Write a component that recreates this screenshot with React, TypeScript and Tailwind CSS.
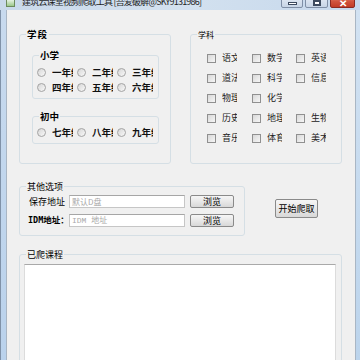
import React from "react";

const font = { fontFamily: '"Noto Sans CJK SC", "Noto Sans", sans-serif' };

function GroupBox({
  label,
  className,
  labelClass,
  children,
}: {
  label: string;
  className: string;
  labelClass?: string;
  children?: React.ReactNode;
}) {
  return (
    <div className={`relative rounded-[3px] border border-[#d5dfe5] ${className}`}>
      <span
        className={`absolute left-[6px] top-[-6px] bg-[#f0f0f0] px-[1px] leading-[11px] text-black ${
          labelClass ?? "text-[9px]"
        }`}
      >
        {label}
      </span>
      {children}
    </div>
  );
}

function Radio({ text }: { text: string }) {
  return (
    <div className="flex h-[13px] w-[40px] items-center overflow-hidden whitespace-nowrap">
      <span className="h-[9px] w-[9px] shrink-0 rounded-full border border-[#a3a3a3] bg-gradient-to-br from-[#d6d6d6] to-[#f8f8f8]" />
      <span className="ml-[6px] w-[21px] overflow-hidden text-[9.5px] font-bold leading-[13px] text-[#111]">
        {text}
      </span>
    </div>
  );
}

function Check({ text }: { text?: string }) {
  if (!text) return <div />;
  return (
    <div className="flex h-[20px] items-center whitespace-nowrap">
      <span className="h-[9px] w-[9px] shrink-0 border border-[#909090] bg-gradient-to-br from-[#d8d8d8] to-[#f6f6f6]" />
      <span className="ml-[6px] w-[15px] overflow-hidden text-[9px] leading-[12px] text-[#222]">{text}</span>
    </div>
  );
}

function WinButton({ className, children }: { className: string; children: React.ReactNode }) {
  return (
    <div
      className={`flex items-center justify-center rounded-[2px] border border-[#7f8fa6] text-[7px] leading-none ${className}`}
    >
      {children}
    </div>
  );
}

function Btn({ label, className }: { label: string; className: string }) {
  return (
    <div
      className={`flex items-center justify-center rounded-[2px] border border-[#8a8a8a] bg-gradient-to-b from-[#f6f6f6] via-[#e8e8e8] to-[#d8d8d8] text-[9px] leading-none text-black ${className}`}
    >
      {label}
    </div>
  );
}

export default function App() {
  const subjects: (string | undefined)[] = [
    "语文", "数学", "英语",
    "道法", "科学", "信息",
    "物理", "化学", undefined,
    "历史", "地理", "生物",
    "音乐", "体育", "美术",
  ];

  return (
    <div className="relative flex h-[360px] w-[360px] flex-col overflow-hidden bg-[#c4d7ec]" style={font}>
      {/* title bar */}
      <div className="flex h-[10px] shrink-0 overflow-hidden bg-gradient-to-r from-[#c9d9ea] via-[#d3e1ef] to-[#c6d8ec]">
        <div className="-mt-[3px] ml-[6px] h-[10px] w-[9px] border border-[#6c8a5c] bg-gradient-to-b from-[#ffffff] to-[#9cc98a]" />
        <span className="-mt-[3px] ml-[7px] whitespace-nowrap text-[9px] leading-[10px] tracking-[-0.8px] text-[#1e1e1e]">
          建筑云课堂视频爬取工具 [吾爱破解@SKY9131986]
        </span>
        <div className="ml-auto mr-[5px] flex gap-[2px]">
          <WinButton className="-mt-[6px] h-[14px] w-[22px] bg-gradient-to-b from-[#e9eff7] to-[#c7d5e6]">
            <span className="mt-[5px] block h-[3px] w-[9px] border border-[#3c4a5e] bg-white" />
          </WinButton>
          <WinButton className="-mt-[6px] h-[14px] w-[23px] bg-gradient-to-b from-[#e9eff7] to-[#c7d5e6]">
            <span className="mt-[3px] block h-[6px] w-[8px] border-2 border-[#3c4a5e] bg-white" />
          </WinButton>
          <WinButton className="-mt-[6px] h-[14px] w-[25px] border-[#8b2a22] bg-gradient-to-b from-[#e8a392] via-[#d2553f] to-[#c23b26]">
            <span className="mt-[4px] text-[10px] font-bold text-white">✕</span>
          </WinButton>
        </div>
      </div>

      {/* window body */}
      <div className="flex min-h-0 flex-1">
        <div className="w-[1px] shrink-0 bg-[#8092a8]" />
        <div className="w-[5px] shrink-0 bg-gradient-to-b from-[#c8daee] to-[#bad2ec]" />
        <div className="w-[1px] shrink-0 bg-[#a9b6c4]" />

        <div className="flex min-w-0 flex-1 flex-col bg-[#f0f0f0] pl-[12px]">
          {/* top row */}
          <div className="mt-[24px] flex gap-[19px]">
            <GroupBox label="学段" className="h-[130px] w-[152px]" labelClass="text-[9.5px] font-bold tracking-[1px]">
              <GroupBox label="小学" className="ml-[12px] mt-[20px] h-[44px] w-[127px]" labelClass="text-[9.5px] font-bold">
                <div className="ml-[4px] mt-[10px] flex flex-col gap-[2px]">
                  <div className="flex">
                    <Radio text="一年级" />
                    <Radio text="二年级" />
                    <Radio text="三年级" />
                  </div>
                  <div className="flex">
                    <Radio text="四年级" />
                    <Radio text="五年级" />
                    <Radio text="六年级" />
                  </div>
                </div>
              </GroupBox>
              <GroupBox label="初中" className="ml-[12px] mt-[17px] h-[28px] w-[127px]" labelClass="text-[9.5px] font-bold">
                <div className="ml-[4px] mt-[9px] flex">
                  <Radio text="七年级" />
                  <Radio text="八年级" />
                  <Radio text="九年级" />
                </div>
              </GroupBox>
            </GroupBox>

            <GroupBox label="学科" className="h-[130px] w-[152px]" labelClass="text-[8px]">
              <div className="ml-[16px] mt-[13px] grid grid-cols-[45px_44px_44px]">
                {subjects.map((s, i) => (
                  <Check key={i} text={s} />
                ))}
              </div>
            </GroupBox>
          </div>

          {/* options row */}
          <div className="mt-[22px] flex items-start">
            <GroupBox label="其他选项" className="h-[50px] w-[226px]">
              <div className="ml-[9px] mt-[8px] flex items-center">
                <span className="w-[40px] text-[9px] leading-none text-black">保存地址</span>
                <div className="flex h-[13px] w-[116px] items-center border border-[#c6c6c6] border-t-[#a6a6a6] bg-white pl-[2px] text-[8px] leading-none text-[#a8a8a8]">
                  默认D盘
                </div>
                <Btn label="浏览" className="ml-[5px] h-[13px] w-[44px]" />
              </div>
              <div className="ml-[8px] mt-[6px] flex items-center">
                <span
                  className="w-[41px] text-[8.5px] font-bold leading-none text-black"
                  style={{ fontFamily: '"DejaVu Sans Mono", "Noto Sans CJK SC", monospace' }}
                >
                  IDM地址：
                </span>
                <div
                  className="flex h-[13px] w-[116px] items-center border border-[#c6c6c6] border-t-[#a6a6a6] bg-white pl-[2px] text-[8px] leading-none text-[#a8a8a8]"
                  style={{ fontFamily: '"Liberation Mono", "Noto Sans CJK SC", monospace' }}
                >
                  IDM 地址
                </div>
                <Btn label="浏览" className="ml-[5px] h-[13px] w-[44px]" />
              </div>
            </GroupBox>
            <Btn label="开始爬取" className="ml-[30px] mt-[13px] h-[19px] w-[43px] text-[9.5px]" />
          </div>

          {/* crawled list */}
          <GroupBox label="已爬课程" className="mt-[18px] h-[140px] w-[323px]">
            <div className="ml-[4px] mr-[5px] mt-[9px] h-[120px] border border-[#dcdcdc] border-t-[#a9a9a9] bg-white" />
          </GroupBox>
        </div>

        <div className="w-[1px] shrink-0 bg-[#a9b6c4]" />
        <div className="w-[4px] shrink-0 bg-gradient-to-b from-[#d2e2f2] to-[#bcd4ec]" />
      </div>
    </div>
  );
}
